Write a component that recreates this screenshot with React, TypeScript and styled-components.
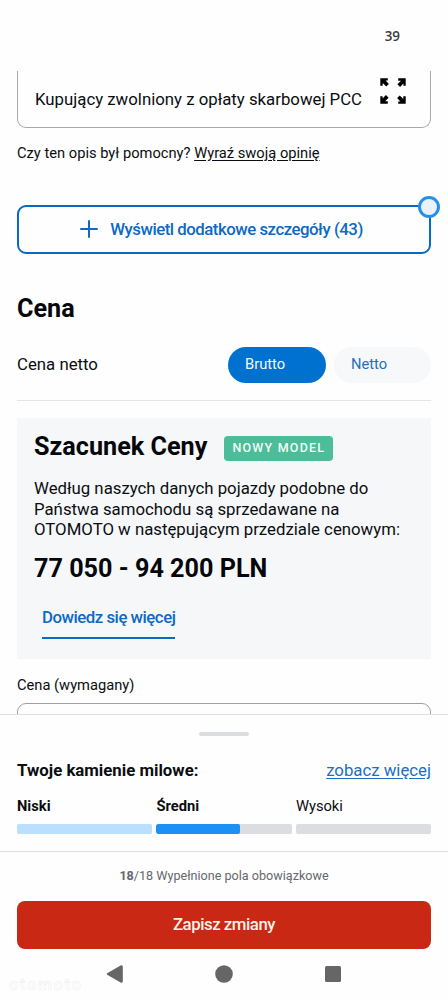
import React from 'react';
import styled, { createGlobalStyle } from 'styled-components';

const GlobalStyle = createGlobalStyle`
  * { box-sizing: border-box; }
  body { margin: 0; background: #fefefe; }
`;

const Screen = styled.div`
  width: 448px;
  height: 1000px;
  overflow: hidden;
  display: flex;
  flex-direction: column;
  background: #fefefe;
  color: #0b0d10;
  font-family: Roboto, 'Liberation Sans', sans-serif;
`;

const StatusBar = styled.header`
  height: 71px;
  flex: none;
  display: flex;
  justify-content: flex-end;
  padding: 26px 48px 0 0;
  font: 600 13.4px/20px 'Open Sans', sans-serif;
  color: #3c3c3c;
`;

const Content = styled.main`
  height: 643px;
  flex: none;
  overflow: hidden;
  padding: 0 17px;
`;

const Description = styled.div`
  height: 57px;
  display: flex;
  justify-content: space-between;
  padding: 0 24px 0 17px;
  border: 1px solid #a9a9a9;
  border-top: 0;
  border-radius: 0 0 9px 9px;
`;

const DescriptionText = styled.span`
  font-size: 16.8px;
  line-height: 24px;
  padding-top: 16px;
  white-space: nowrap;
`;

const ExpandIcon = styled.svg`
  width: 26px;
  height: 26px;
  margin-top: 7px;
  flex: none;
`;

const Feedback = styled.p`
  margin: 15px 0 0;
  font-size: 14.7px;
  line-height: 21px;
  white-space: nowrap;
`;

const PlainLink = styled.a`
  text-decoration: underline;
  text-underline-offset: 2px;
`;

const DetailsButton = styled.button`
  position: relative;
  width: 100%;
  height: 49px;
  margin: 41px 0 0;
  padding: 0 5px 1px 0;
  display: flex;
  align-items: center;
  justify-content: center;
  gap: 12px;
  border: 2px solid #0b69c4;
  border-radius: 9px;
  background: transparent;
  color: #0b69c7;
  font: 500 16.8px/24px Roboto, sans-serif;
  letter-spacing: -0.48px;
  white-space: nowrap;
`;

const Dot = styled.span`
  position: absolute;
  top: -11px;
  right: -11px;
  width: 22px;
  height: 22px;
  border-radius: 50%;
  border: 3px solid #2490ea;
  background: #e9f2fb;
`;

const SectionTitle = styled.h2`
  margin: 39px 0 0;
  font-size: 25.2px;
  line-height: 32px;
  font-weight: 700;
  color: #05070a;
`;

const PriceRow = styled.div`
  height: 76px;
  padding-top: 5px;
  display: flex;
  align-items: center;
  justify-content: space-between;
  border-bottom: 1px solid #e3e5e8;
  font-size: 16.8px;
`;

const PriceLabel = styled.span`
  line-height: 22px;
  padding-bottom: 2px;
`;

const Pills = styled.div`
  display: flex;
  gap: 8px;
`;

const Pill = styled.span<{ $active?: boolean }>`
  width: ${(p) => (p.$active ? 98 : 97)}px;
  height: 36px;
  padding-left: 17px;
  border-radius: 18px;
  font-size: 14.7px;
  line-height: 35px;
  background: ${(p) => (p.$active ? '#0071ce' : '#f6f8fa')};
  color: ${(p) => (p.$active ? '#f2f9ff' : '#1e6fbd')};
`;

const Estimate = styled.section`
  margin-top: 17px;
  height: 241px;
  padding: 13px 17px 0;
  background: #f5f7f9;
`;

const EstimateHead = styled.div`
  display: flex;
  align-items: center;
  gap: 17px;
  height: 32px;
`;

const Amount = styled.strong`
  display: block;
  margin: 0;
  font-size: 25.2px;
  line-height: 32px;
  font-weight: 700;
  color: #05070a;
  white-space: nowrap;
`;

const Badge = styled.span`
  width: 109px;
  height: 25px;
  margin-top: 3px;
  border-radius: 4px;
  background: #4dbc98;
  color: #f1fff9;
  text-align: center;
  font-size: 12.5px;
  line-height: 24px;
  font-weight: 500;
  letter-spacing: 1.2px;
  white-space: nowrap;
`;

const EstimateText = styled.p`
  margin: 15.4px 0 13.6px;
  font-size: 16.8px;
  line-height: 20.4px;
  white-space: nowrap;
`;

const MoreLink = styled.a`
  display: inline-block;
  margin: 20px 0 0 8px;
  height: 34px;
  border-bottom: 2px solid #0b69c7;
  color: #0b69c7;
  font-size: 16.8px;
  line-height: 24px;
  font-weight: 500;
  letter-spacing: -0.48px;
  white-space: nowrap;
`;

const FieldLabel = styled.label`
  display: block;
  margin-top: 16px;
  font-size: 14.7px;
  line-height: 21px;
`;

const Field = styled.div`
  height: 48px;
  margin-top: 7px;
  border: 1px solid #a0a0a0;
  border-radius: 9px;
`;

const Milestones = styled.section`
  height: 137px;
  flex: none;
  border-top: 1px solid #dcdee0;
  padding: 17px 17px 0;
`;

const Handle = styled.div`
  width: 50px;
  height: 4px;
  margin: 0 auto;
  border-radius: 2px;
  background: #dcdde1;
`;

const MilestoneHead = styled.div`
  display: flex;
  justify-content: space-between;
  margin-top: 22px;
  font-size: 16.8px;
  line-height: 24px;
  white-space: nowrap;
`;

const Strong = styled.b`
  font-weight: 700;
`;

const BlueLink = styled(PlainLink)`
  color: #1b70c0;
`;

const Levels = styled.div`
  display: grid;
  grid-template-columns: repeat(3, 1fr);
  gap: 4.4px;
  margin-top: 14px;
`;

const Level = styled.div<{ $bold?: boolean }>`
  font-size: 14.7px;
  line-height: 21px;
  font-weight: ${(p) => (p.$bold ? 700 : 400)};
`;

const Track = styled.div`
  height: 10px;
  margin-top: 7px;
  border-radius: 2px;
  overflow: hidden;
  background: #dcdde1;
`;

const Fill = styled.div<{ $color: string }>`
  height: 100%;
  border-radius: 2px;
  background: ${(p) => p.$color};
`;

const Footer = styled.footer`
  height: 98px;
  flex: none;
  border-top: 1px solid #dcdee0;
  padding: 13px 17px 0;
  text-align: center;
`;

const Counter = styled.div`
  font-size: 12.6px;
  line-height: 22px;
  color: #65686e;
`;

const SaveButton = styled.button`
  display: block;
  width: 100%;
  height: 48px;
  margin: 14px 0 0;
  padding: 0 0 2px;
  border: 0;
  border-radius: 8px;
  background: #c82814;
  color: #fff1e8;
  font: 500 16.8px/46px Roboto, sans-serif;
  letter-spacing: -0.46px;
`;

const NavBar = styled.nav`
  position: relative;
  flex: 1;
  display: flex;
  justify-content: space-between;
  padding: 16px 106px 0;
`;

const NavIcon = styled.svg`
  width: 18px;
  height: 18px;
  fill: #666;
  overflow: visible;
`;

const Watermark = styled.span`
  position: absolute;
  left: 9px;
  top: 26px;
  font-size: 16px;
  line-height: 20px;
  font-weight: 700;
  letter-spacing: 1.9px;
  color: #fefefe;
  -webkit-text-stroke: 0.5px #efefef;
`;

const levels = [
  { name: 'Niski', bold: true, value: 100, color: '#bbdfff' },
  { name: 'Średni', bold: true, value: 61.5, color: '#1b90f5' },
  { name: 'Wysoki', bold: false, value: 0, color: '#1b90f5' },
];

export default function App() {
  return (
    <Screen>
      <GlobalStyle />
      <StatusBar>39</StatusBar>
      <Content>
        <Description>
          <DescriptionText>Kupujący zwolniony z opłaty skarbowej PCC</DescriptionText>
          <ExpandIcon viewBox="0 0 26 26">
            {[0, 90, 180, 270].map((angle) => (
              <g key={angle} transform={`rotate(${angle} 13 13)`}>
                <path d="M0.3 0.3H7.8V2.6H5.6L8.9 5.9L6.2 8.6L2.7 5.1V7.8H0.3Z" fill="#000" />
              </g>
            ))}
          </ExpandIcon>
        </Description>
        <Feedback>
          Czy ten opis był pomocny? <PlainLink>Wyraź swoją opinię</PlainLink>
        </Feedback>
        <DetailsButton>
          <svg width="18" height="18" viewBox="0 0 18 18" stroke="#0b69c7" strokeWidth="2" strokeLinecap="round">
            <path d="M9 1V17M1 9H17" />
          </svg>
          Wyświetl dodatkowe szczegóły (43)
          <Dot />
        </DetailsButton>
        <SectionTitle>Cena</SectionTitle>
        <PriceRow>
          <PriceLabel>Cena netto</PriceLabel>
          <Pills>
            <Pill $active>Brutto</Pill>
            <Pill>Netto</Pill>
          </Pills>
        </PriceRow>
        <Estimate>
          <EstimateHead>
            <Amount as="h3">Szacunek Ceny</Amount>
            <Badge>NOWY MODEL</Badge>
          </EstimateHead>
          <EstimateText>
            Według naszych danych pojazdy podobne do
            <br />
            Państwa samochodu są sprzedawane na
            <br />
            OTOMOTO w następującym przedziale cenowym:
          </EstimateText>
          <Amount>77 050 - 94 200 PLN</Amount>
          <MoreLink>Dowiedz się więcej</MoreLink>
        </Estimate>
        <FieldLabel>Cena (wymagany)</FieldLabel>
        <Field />
      </Content>
      <Milestones>
        <Handle />
        <MilestoneHead>
          <Strong>Twoje kamienie milowe:</Strong>
          <BlueLink>zobacz więcej</BlueLink>
        </MilestoneHead>
        <Levels>
          {levels.map((l) => (
            <Level key={l.name} $bold={l.bold}>
              {l.name}
              <Track>
                <Fill $color={l.color} style={{ width: `${l.value}%` }} />
              </Track>
            </Level>
          ))}
        </Levels>
      </Milestones>
      <Footer>
        <Counter>
          <Strong>18</Strong>/18 Wypełnione pola obowiązkowe
        </Counter>
        <SaveButton>Zapisz zmiany</SaveButton>
      </Footer>
      <NavBar>
        <NavIcon viewBox="0 0 18 18">
          <path d="M1.2 8.2L14.6 0.6Q16.6 -0.2 16.8 1.8V16.2Q16.6 18.2 14.6 17.4L1.2 9.8Q0 9 1.2 8.2Z" />
        </NavIcon>
        <NavIcon viewBox="0 0 18 18">
          <circle cx="9" cy="9" r="8.8" />
        </NavIcon>
        <NavIcon viewBox="0 0 18 18">
          <rect x="1" y="1" width="16" height="16" rx="1.5" />
        </NavIcon>
        <Watermark>otomoto</Watermark>
      </NavBar>
    </Screen>
  );
}
